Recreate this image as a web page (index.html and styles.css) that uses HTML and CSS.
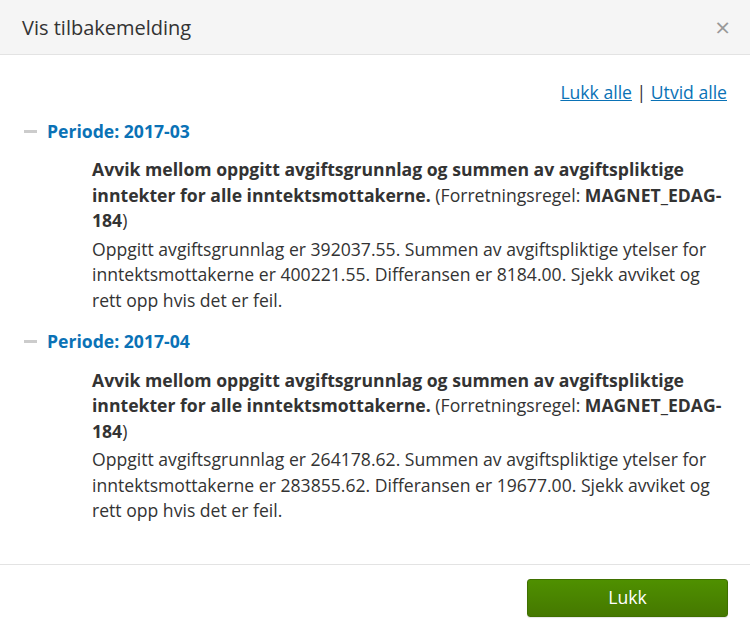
FILE: index.html
```html
<!DOCTYPE html>
<html lang="no">
<head>
    <meta charset="UTF-8">
    <meta name="viewport" content="width=device-width, initial-scale=1.0">
    <title>Vis tilbakemelding</title>
    <link rel="stylesheet" href="styles.css">
</head>
<body>

    <div class="modal">
        <div class="modalHeader">
            <h2 class="modalTitle">Vis tilbakemelding</h2>
            <button class="closeButton" aria-label="Lukk">&times;</button>
        </div>

        <div class="modalBody">
            <div class="toggleLinks">
                <a href="#">Lukk alle</a> <span class="sep">|</span> <a href="#">Utvid alle</a>
            </div>

            <div class="period">
                <div class="periodTitle"><span class="dash"></span>Periode: 2017-03</div>
                <div class="message">
                    <p class="messageTitle"><strong>Avvik mellom oppgitt avgiftsgrunnlag og summen av avgiftspliktige inntekter for alle inntektsmottakerne.</strong> (Forretningsregel: <strong>MAGNET_EDAG-184</strong>)</p>
                    <p class="messageText">Oppgitt avgiftsgrunnlag er 392037.55. Summen av avgiftspliktige ytelser for inntektsmottakerne er 400221.55. Differansen er 8184.00. Sjekk avviket og rett opp hvis det er feil.</p>
                </div>
            </div>

            <div class="period">
                <div class="periodTitle"><span class="dash"></span>Periode: 2017-04</div>
                <div class="message">
                    <p class="messageTitle"><strong>Avvik mellom oppgitt avgiftsgrunnlag og summen av avgiftspliktige inntekter for alle inntektsmottakerne.</strong> (Forretningsregel: <strong>MAGNET_EDAG-184</strong>)</p>
                    <p class="messageText">Oppgitt avgiftsgrunnlag er 264178.62. Summen av avgiftspliktige ytelser for inntektsmottakerne er 283855.62. Differansen er 19677.00. Sjekk avviket og rett opp hvis det er feil.</p>
                </div>
            </div>
        </div>

        <div class="modalFooter">
            <button class="primaryButton">Lukk</button>
        </div>
    </div>

</body>
</html>
```

FILE: styles.css
```css
body {
    font-family: 'Open Sans', sans-serif;
    margin: 0;
    padding: 0;
    background-color: #fff;
    color: #333;
}

.modal {
    width: 750px;
    height: 635px;
    display: flex;
    flex-direction: column;
}

.modalHeader {
    height: 55px;
    box-sizing: border-box;
    background-color: #f5f5f5;
    border-bottom: 1px solid #e3e3e3;
    display: flex;
    align-items: center;
    justify-content: space-between;
    padding: 0 20px 0 22px;
}

.modalTitle {
    margin: 0;
    font-size: 20px;
    font-weight: normal;
    color: #333;
}

.closeButton {
    background: none;
    border: none;
    padding: 0;
    font-family: 'Open Sans', sans-serif;
    font-size: 26px;
    line-height: 1;
    color: #999;
    cursor: pointer;
}

.modalBody {
    flex: 1;
    padding: 25px 23px 0 23px;
    font-size: 17.6px;
    line-height: 25.5px;
}

.toggleLinks {
    text-align: right;
    margin-bottom: 13px;
}

.toggleLinks a {
    color: #0a72b6;
}

.sep {
    color: #333;
}

.periodTitle {
    font-weight: bold;
    color: #0a72b6;
    display: flex;
    align-items: center;
}

.dash {
    width: 13px;
    height: 3px;
    background-color: #ccc;
    margin: 0 10px 0 1px;
}

.message {
    padding: 13px 0 0 69px;
    margin-bottom: 16px;
}

.message p {
    margin: 0;
}

.messageText {
    margin-top: 3px !important;
}

.modalFooter {
    border-top: 1px solid #e3e3e3;
    height: 71px;
    box-sizing: border-box;
    display: flex;
    justify-content: flex-end;
    align-items: flex-start;
    padding: 14px 22px 0 0;
}

.primaryButton {
    width: 201px;
    height: 38px;
    padding: 0 0 2px 0;
    border: 1px solid #3f7000;
    border-radius: 3px;
    background: linear-gradient(#4f9000, #457800);
    box-shadow: 0 1px 1px rgba(0, 0, 0, 0.1);
    color: #fff;
    font-family: 'Open Sans', sans-serif;
    font-size: 17.6px;
    cursor: pointer;
}
```
